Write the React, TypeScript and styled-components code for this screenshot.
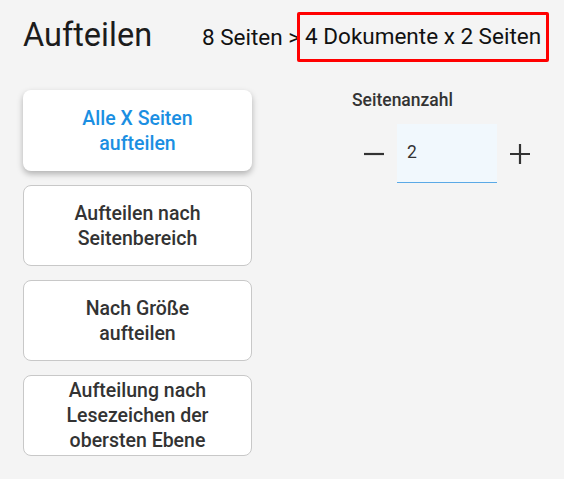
import styled, { createGlobalStyle } from 'styled-components';

const Global = createGlobalStyle`
    html, body {
        margin: 0;
        padding: 0;
        background: #f4f4f4;
        font-family: Roboto, 'Noto Sans', sans-serif;
    }
`

const Page = styled.div`
    width: 564px;
    height: 479px;
    box-sizing: border-box;
    padding: 11px 12px 0 23px;
    color: #222;
`

const Header = styled.div`
    display: flex;
    align-items: center;
    height: 51px;
`

const Title = styled.h1`
    margin: 0 0 4px 0;
    font-size: 32.5px;
    font-weight: 400;
    color: #1c1c1c;
    width: 179px;
`

const Summary = styled.div`
    display: flex;
    align-items: center;
    font-size: 22.5px;
    color: #111;
    white-space: nowrap;
`

const Highlight = styled.span`
    display: flex;
    align-items: center;
    height: 50px;
    box-sizing: border-box;
    border: 3px solid #f00;
    border-radius: 2px;
    padding: 0 5px 1px 5px;
    margin-left: -3px;
`

const Body = styled.div`
    display: flex;
    margin-top: 28px;
`

const Options = styled.div`
    display: flex;
    flex-direction: column;
    gap: 14px;
    width: 229px;
`

const Option = styled.button<{ $active?: boolean }>`
    height: 81px;
    box-sizing: border-box;
    display: flex;
    align-items: center;
    justify-content: center;
    padding: 0 8px;
    border-radius: 8px;
    background: #fff;
    border: ${p => (p.$active ? '1px solid transparent' : '1px solid #c8c8c8')};
    box-shadow: ${p => (p.$active ? '0 3px 6px rgba(0,0,0,0.28)' : 'none')};
    color: ${p => (p.$active ? '#1b8fe2' : '#333')};
    font-family: Roboto, sans-serif;
    font-size: 19.5px;
    font-weight: 500;
    line-height: 25px;
    text-align: center;
`

const Settings = styled.div`
    margin-left: 100px;
    display: flex;
    flex-direction: column;
`

const Label = styled.div`
    font-size: 17.5px;
    font-weight: 500;
    color: #333;
`

const Stepper = styled.div`
    display: flex;
    align-items: center;
    gap: 13px;
    margin-left: 12px;
    margin-top: 14px;
`

const StepButton = styled.button`
    width: 20px;
    height: 20px;
    border: none;
    background: none;
    padding: 0;
    display: flex;
    align-items: center;
    justify-content: center;
`

const Field = styled.div`
    width: 100px;
    height: 59px;
    box-sizing: border-box;
    background: #f1f8fd;
    border-bottom: 1px solid #5aa9e6;
    padding: 0 10px 2px;
    display: flex;
    align-items: center;
    font-size: 17.5px;
    color: #333;
`

const Minus = () => (
    <svg width="20" height="20" viewBox="0 0 20 20">
        <path d="M0 10h20" stroke="#333" strokeWidth="2.2" />
    </svg>
)

const Plus = () => (
    <svg width="20" height="20" viewBox="0 0 20 20">
        <path d="M0 10h20M10 0v20" stroke="#333" strokeWidth="2.2" />
    </svg>
)

export default function App() {
    return (
        <Page>
            <Global />
            <Header>
                <Title>Aufteilen</Title>
                <Summary>
                    8 Seiten &gt;
                    <Highlight>4 Dokumente x 2 Seiten</Highlight>
                </Summary>
            </Header>
            <Body>
                <Options>
                    <Option $active>Alle X Seiten<br />aufteilen</Option>
                    <Option>Aufteilen nach<br />Seitenbereich</Option>
                    <Option>Nach Größe<br />aufteilen</Option>
                    <Option>Aufteilung nach<br />Lesezeichen der<br />obersten Ebene</Option>
                </Options>
                <Settings>
                    <Label>Seitenanzahl</Label>
                    <Stepper>
                        <StepButton><Minus /></StepButton>
                        <Field>2</Field>
                        <StepButton><Plus /></StepButton>
                    </Stepper>
                </Settings>
            </Body>
        </Page>
    )
}
